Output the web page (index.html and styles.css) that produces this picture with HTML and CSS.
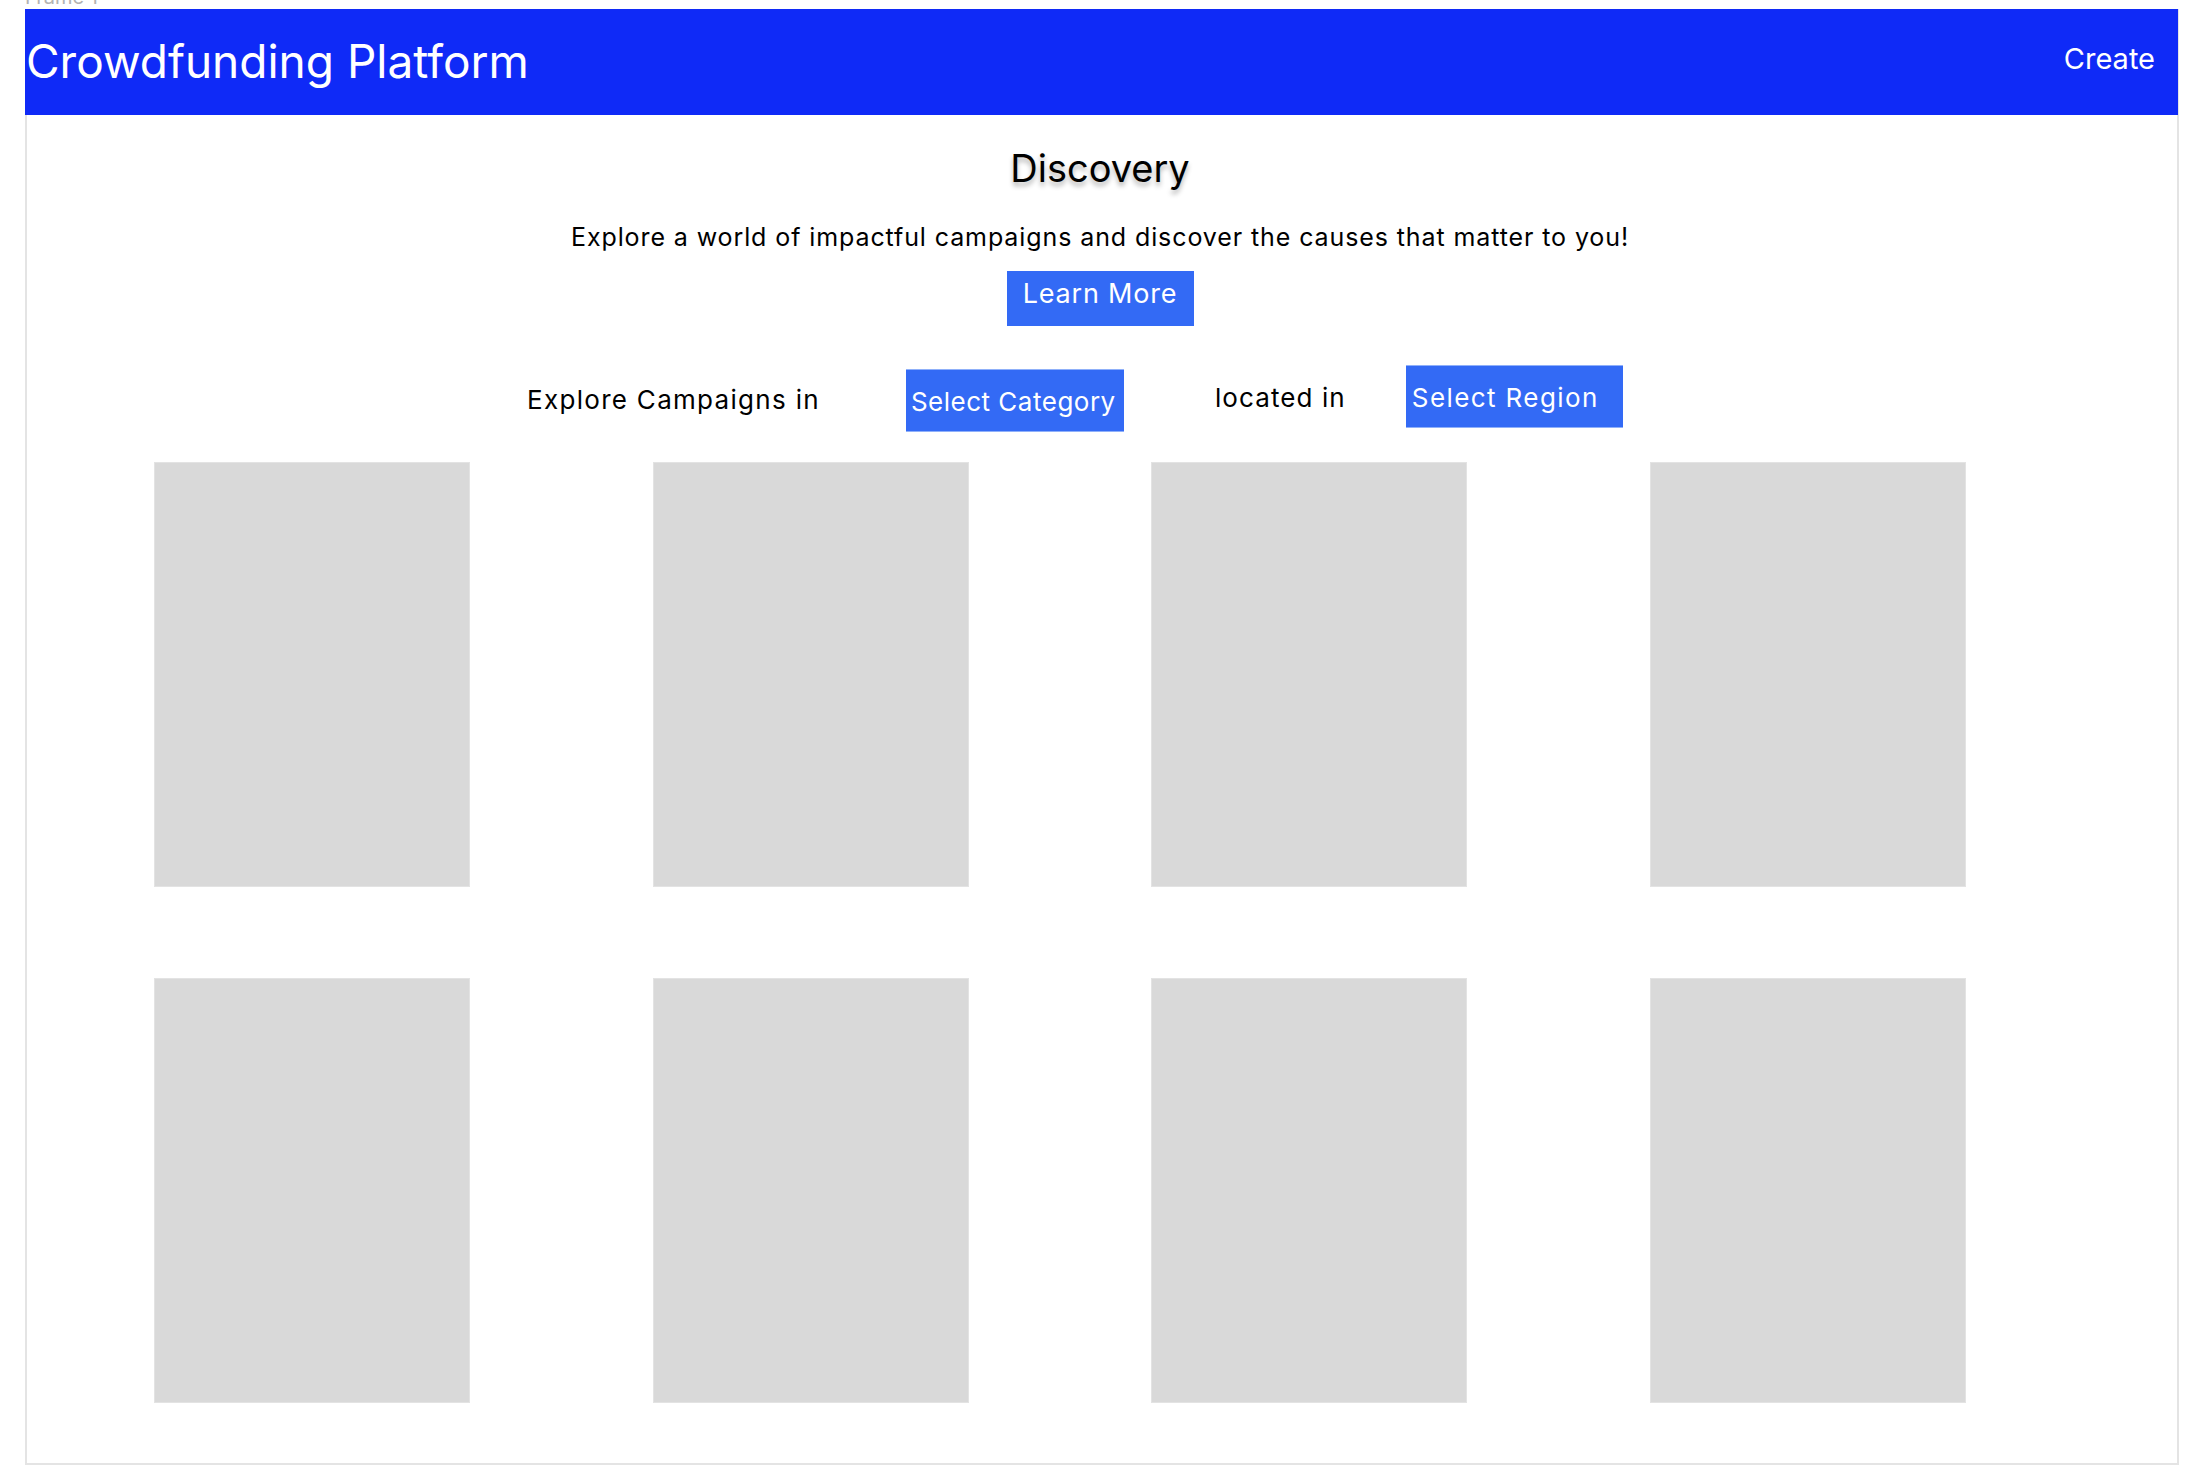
FILE: index.html
```html
<!DOCTYPE html>
<html lang="en">
<head>
<meta charset="utf-8">
<title>Crowdfunding Platform</title>
<link rel="stylesheet" href="styles.css">
</head>
<body>
<div class="frame-label">Frame 1</div>
<div class="frame">
  <header class="topbar">
    <h1 class="brand">Crowdfunding Platform</h1>
    <a class="create" href="#">Create</a>
  </header>
  <section class="hero">
    <h2 class="hero-title">Discovery</h2>
    <p class="hero-sub">Explore a world of impactful campaigns and discover the causes that matter to you!</p>
    <button class="btn btn-learn">Learn More</button>
  </section>
  <div class="filters">
    <span class="filter-text filter-text-1">Explore Campaigns in</span>
    <button class="btn btn-select btn-category">Select Category</button>
    <span class="filter-text filter-text-2">located in</span>
    <button class="btn btn-select btn-region">Select Region</button>
  </div>
  <div class="grid">
    <div class="card"></div>
    <div class="card"></div>
    <div class="card"></div>
    <div class="card"></div>
    <div class="card"></div>
    <div class="card"></div>
    <div class="card"></div>
    <div class="card"></div>
  </div>
</div>
</body>
</html>
```
FILE: styles.css
```css
* { box-sizing: border-box; }
html, body { margin: 0; padding: 0; background: #ffffff; }
body { font-family: Inter, "Noto Sans", sans-serif; color: #000; }

.frame-label {
  margin: -13px 0 2px 25px;
  height: 20px;
  font-size: 20px;
  line-height: 20px;
  color: #b3b3b3;
}

.frame {
  margin-left: 25px;
  width: 2154px;
  height: 1456px;
  border: 2px solid #e4e4e4;
  border-top: none;
}

.topbar {
  margin: 0 -1px 0 -2px;
  height: 106px;
  background: #0f2af7;
  display: flex;
  align-items: center;
  justify-content: space-between;
  padding: 0 23px 0 1px;
  color: #fff;
}
.brand {
  margin: 0;
  font-size: 46px;
  font-weight: 400;
  line-height: 56px;
  padding-bottom: 2px;
}
.create {
  color: #fff;
  text-decoration: none;
  font-size: 29px;
  line-height: 34px;
  padding-bottom: 6px;
}

.hero {
  display: flex;
  flex-direction: column;
  align-items: center;
  padding-top: 31px;
  padding-right: 4px;
}
.hero-title {
  margin: 0;
  font-size: 38px;
  font-weight: 400;
  line-height: 45px;
  text-shadow: 0 4px 5px rgba(0, 0, 0, 0.3);
}
.hero-sub {
  margin: 31px 0 0;
  font-size: 25px;
  line-height: 30px;
  letter-spacing: 0.9px;
}

.btn {
  font-family: Inter, "Noto Sans", sans-serif;
  border: none;
  background: #336af5;
  color: #fff;
  cursor: pointer;
  margin: 0;
}
.btn-learn {
  margin-top: 19px;
  width: 187px;
  height: 55px;
  font-size: 27px;
  line-height: 33px;
  letter-spacing: 0.8px;
  padding: 6px 0 16px;
  text-align: center;
}

.filters {
  display: flex;
  align-items: flex-start;
  padding-left: 500px;
  margin-top: 39px;
  height: 67px;
}
.filter-text {
  font-size: 26px;
  line-height: 32px;
  letter-spacing: 1.3px;
}
.filter-text-1 { margin-top: 19px; }
.filter-text-2 { margin-top: 17px; margin-left: 91px; letter-spacing: 1.1px; }
.btn-select {
  height: 63px;
  font-size: 26px;
  line-height: 32px;
  text-align: left;
  padding-left: 5px;
  border-top: 1px solid #8fb0fa;
  border-bottom: 1px solid #8fb0fa;
  white-space: nowrap;
}
.btn-category {
  width: 218px;
  margin-top: 4px;
  margin-left: 86px;
  padding-top: 16px;
  padding-bottom: 14px;
  letter-spacing: 0.5px;
}
.btn-region {
  width: 217px;
  margin-left: 60px;
  padding-top: 16px;
  padding-bottom: 14px;
  padding-left: 6px;
  letter-spacing: 1.4px;
}

.grid {
  display: grid;
  grid-template-columns: repeat(4, 316px);
  grid-auto-rows: 425px;
  column-gap: 182.5px;
  row-gap: 91px;
  padding-left: 127px;
  margin-top: 30px;
}
.card {
  background: #d9d9d9;
  border: 1px solid #e3e3e3;
}
```
